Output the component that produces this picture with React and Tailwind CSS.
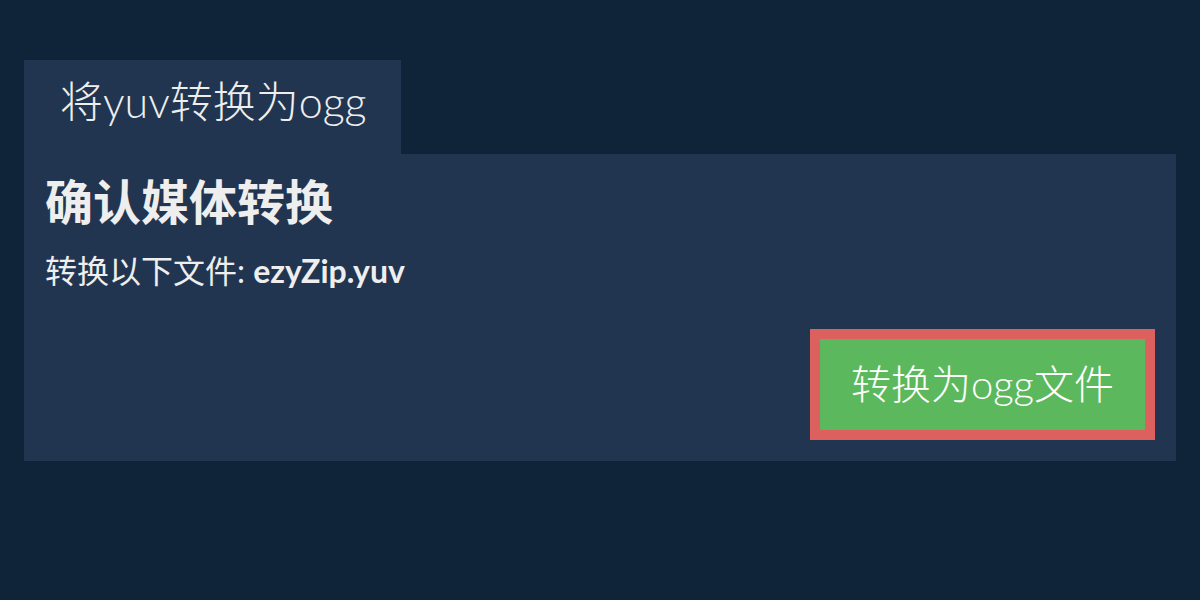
import React from 'react';

const font = { fontFamily: 'Lato, "Noto Sans CJK SC", sans-serif' };

const ConvertCard = () => {
    return (
        <div className="px-6 pt-[60px]">
            <div className="inline-block bg-[#213550] pl-[36px] pr-[35px] pt-[15px] pb-[25px] text-[43px] leading-[54px] font-light text-[#eeeeee]">
                将yuv转换为ogg
            </div>
            <div className="bg-[#213550] px-[21px] pt-[17px] pb-[21px] text-[#eeeeee]">
                <h1 className="text-[48px] leading-[62px] font-bold">确认媒体转换</h1>
                <p className="mt-[18px] text-[32px] leading-[40px]">
                    转换以下文件: <b className="font-bold">ezyZip.yuv</b>
                </p>
                <div className="flex justify-end mt-[38px]">
                    <button className="border-[10px] border-[#dc605d] bg-[#5cb85c] px-[31px] py-[20px] text-[40px] leading-[51px] font-light text-white">
                        转换为ogg文件
                    </button>
                </div>
            </div>
        </div>
    );
};

export default function App() {
    return (
        <div className="w-[1200px] h-[600px] bg-[#0f2339]" style={font}>
            <ConvertCard />
        </div>
    );
}
